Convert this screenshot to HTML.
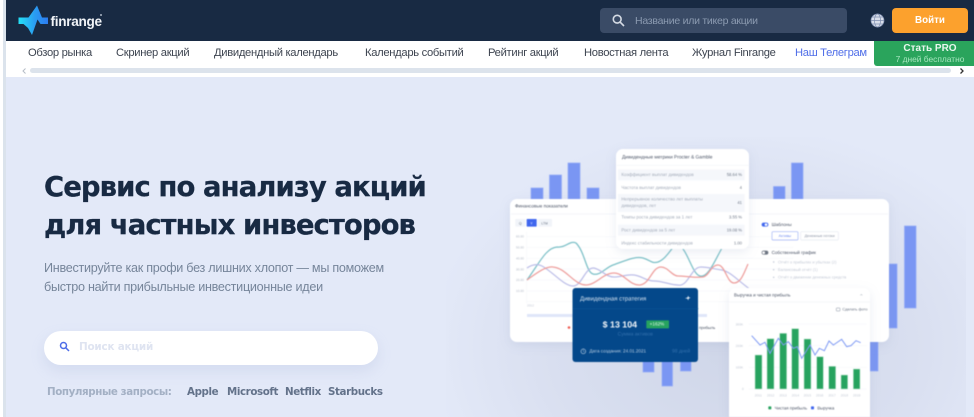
<!DOCTYPE html>
<html lang="ru"><head><meta charset="utf-8"><title>Finrange</title>
<style>
*{box-sizing:border-box;margin:0;padding:0}
html,body{width:974px;height:417px;overflow:hidden;background:#fff;font-family:"Liberation Sans",sans-serif}
.a{position:absolute;white-space:nowrap}
#strip{left:0;top:0;width:6px;height:417px;background:#fff}
#strip2{left:3px;top:0;width:3px;height:417px;background:#dbe3ec}
#top{left:6px;top:0;width:968px;height:41px;background:#182a43}
#nav{left:6px;top:41px;width:968px;height:36px;background:#fff}
#hero{left:6px;top:77px;width:968px;height:340px;background:#e3e9f8;overflow:hidden}
#glow{left:440px;top:60px;width:520px;height:300px;background:radial-gradient(ellipse at 55% 70%,#cfd6e8 0%,#d9dff0 45%,#e3e9f8 75%)}
.n{top:45.5px;font-size:11.2px;color:#3d4450;line-height:14px;letter-spacing:-.3px}
h1{font:700 27.5px/38px "DejaVu Sans",sans-serif;color:#182a43;left:44px;top:168px;letter-spacing:-.95px;-webkit-text-stroke:.25px #182a43}
.p{left:44px;font-size:12.6px;color:#76859a;line-height:18px;letter-spacing:-.27px}
.m{top:385px;font:700 10.3px/14px "DejaVu Sans",sans-serif;color:#63728a;letter-spacing:-.4px}
svg text{font-family:"Liberation Sans",sans-serif;text-rendering:geometricPrecision}
</style></head><body>
<div class="a" id="strip"></div><div class="a" id="strip2"></div>
<div class="a" id="top"></div>
<svg class="a" style="left:0;top:0" width="60" height="40" viewBox="0 0 60 40">
<defs><linearGradient id="lg" x1="0" x2="1" y1="0" y2="0"><stop offset="0" stop-color="#25e0f5"/><stop offset=".55" stop-color="#2a9cf2"/><stop offset="1" stop-color="#2c7cf0"/></linearGradient></defs>
<path d="M18.500 17.500H28.500L37 5.500 42 17.500H48V24H40.500L37.500 19.500 32 35 28 28 23.500 24H18.500Z" fill="url(#lg)"/>
</svg>
<div class="a" style="left:50.500px;top:12.500px;font-size:13.6px;font-weight:700;color:#f1f4f8;letter-spacing:-.3px;line-height:17px">finrange</div>
<div class="a" style="left:100px;top:14px;width:2px;height:2px;border-radius:50%;background:#aab5c4"></div>

<div class="a" style="left:600px;top:8px;width:247px;height:25px;background:#3a4b66;border-radius:4px"></div>
<svg class="a" style="left:612px;top:14px" width="13" height="13" viewBox="0 0 13 13" fill="none" stroke="#d5dbe4" stroke-width="1.600"><circle cx="5.200" cy="5.200" r="3.900"/><path d="M8.200 8.200L12 12"/></svg>
<div class="a" style="left:635px;top:13.500px;font-size:10.500px;color:#8c9bb1;line-height:14px;letter-spacing:-.25px">Название или тикер акции</div>
<svg class="a" style="left:870px;top:13px" width="15" height="15" viewBox="0 0 15 15" fill="#d8deea" stroke="#7f8fb0" stroke-width=".7"><circle cx="7.500" cy="7.500" r="6.500"/><ellipse cx="7.500" cy="7.500" rx="3" ry="6.500" fill="none"/><path d="M1 7.500H14M2 4H13M2 11H13" fill="none"/></svg>
<div class="a" style="left:892px;top:8px;width:76px;height:25px;background:#fca12d;border-radius:4px;text-align:center;color:#fff;font-size:9.800px;font-weight:700;line-height:25px">Войти</div>

<div class="a" id="nav"></div>
<div class="a n" style="left:28px">Обзор рынка</div>
<div class="a n" style="left:116px">Скринер акций</div>
<div class="a n" style="left:214px">Дивидендный календарь</div>
<div class="a n" style="left:365px">Календарь событий</div>
<div class="a n" style="left:488px">Рейтинг акций</div>
<div class="a n" style="left:584px">Новостная лента</div>
<div class="a n" style="left:692px">Журнал Finrange</div>
<div class="a n" style="left:795px;color:#4f6ee8">Наш Телеграм</div>
<div class="a" style="left:874px;top:41px;width:100px;height:25px;background:#2aa45c;border-radius:0 0 0 3px"></div>
<div class="a" style="left:890px;top:43px;width:80px;text-align:center;font-size:10px;font-weight:700;color:#e9f7ef;line-height:12px">Стать PRO</div>
<div class="a" style="left:890px;top:52.500px;width:80px;text-align:center;font-size:8.400px;color:#a8e6bf;line-height:12px">7 дней бесплатно</div>
<div class="a" style="left:30px;top:68px;width:921px;height:5px;background:#dce3ec;border-radius:3px"></div>
<svg class="a" style="left:20px;top:67px" width="8" height="8" viewBox="0 0 8 8" fill="none" stroke="#b5bcc6" stroke-width="1"><path d="M5.500 1.500L3 4l2.500 2.500"/></svg>
<svg class="a" style="left:958px;top:67px" width="8" height="8" viewBox="0 0 8 8" fill="none" stroke="#333" stroke-width="1.300"><path d="M2.500 1.500L5 4 2.500 6.500"/></svg>

<div class="a" id="hero"><div class="a" id="glow"></div></div>

<h1 class="a">Сервис по анализу акций<br>для частных инвесторов</h1>
<div class="a p" style="top:259px">Инвестируйте как профи без лишних хлопот — мы поможем</div>
<div class="a p" style="top:278px">быстро найти прибыльные инвестиционные идеи</div>

<div class="a" style="left:44px;top:331px;width:334px;height:34px;background:#fff;border-radius:17px;box-shadow:0 6px 14px rgba(150,165,210,.2)"></div>
<svg class="a" style="left:59px;top:341px" width="11" height="12" viewBox="0 0 11 12" fill="none" stroke="#4f6ee8" stroke-width="1.500"><circle cx="4.500" cy="4.500" r="3"/><path d="M6.800 6.800L10 10"/></svg>
<div class="a" style="left:79px;top:340px;font:700 10.400px/14px 'DejaVu Sans',sans-serif;color:#dfe4f1;letter-spacing:-.2px">Поиск акций</div>
<div class="a m" style="left:47px;color:#a3b0c4">Популярные запросы:</div>
<div class="a m" style="left:187px">Apple</div>
<div class="a m" style="left:227px">Microsoft</div>
<div class="a m" style="left:285px">Netflix</div>
<div class="a m" style="left:328px">Starbucks</div>

<svg class="a" style="left:0;top:0;filter:blur(.45px)" width="974" height="417" viewBox="0 0 974 417">
<defs>
<filter id="sh" x="-10%" y="-10%" width="120%" height="125%"><feDropShadow dx="0" dy="3" stdDeviation="5" flood-color="#8c9ac0" flood-opacity=".18"/></filter>
</defs>
<g fill="#7a96f3" stroke="#92a9f5" stroke-width=".7">
<rect x="531" y="188" width="12" height="20"/><rect x="549.500" y="175" width="12" height="30"/><rect x="568" y="163" width="12" height="42"/><rect x="587" y="188" width="12" height="20"/>
<rect x="773.500" y="186.500" width="11.500" height="20"/><rect x="791.500" y="163" width="11.500" height="40"/>
<rect x="885.500" y="264" width="11.500" height="64"/><rect x="904.500" y="226" width="11.500" height="82"/>
<rect x="870" y="335" width="8" height="36"/>
<rect x="643" y="350" width="11" height="22"/><rect x="662" y="350" width="10.500" height="36"/><rect x="680.500" y="350" width="10.500" height="21"/>
</g>
<!-- wide card -->
<rect x="510" y="199" width="379" height="143" rx="7" fill="#fff" filter="url(#sh)"/>
<path d="M511 214H888" stroke="#f3f5fa"/>
<g transform="translate(500 130) scale(.33333)">
<text x="45" y="233" font-size="14" fill="#4b5466">Финансовые показатели</text>
<rect x="46" y="267" width="30" height="23" rx="2" fill="#f1f4f9"/><text x="57" y="283" font-size="10" fill="#6c7686">Q</text>
<rect x="80" y="267" width="30" height="23" rx="2" fill="#3f66ee"/><text x="91" y="283" font-size="10" fill="#fff">Y</text>
<rect x="114" y="267" width="42" height="23" rx="2" fill="#f1f4f9"/><text x="124" y="283" font-size="10" fill="#6c7686">LTM</text>
<g font-size="9.500" fill="#b5bcc9">
<text x="48" y="323">60.00</text><text x="48" y="356">50.00</text><text x="48" y="388">40.00</text><text x="48" y="421">30.00</text><text x="48" y="453">20.00</text><text x="48" y="486">10.00</text>
</g>
<g stroke="#f3f5f9" stroke-width="1.500">
<path d="M80 320H880M80 352H880M80 385H880M80 417H880M80 450H880M80 483H880M80 515H880M80 305V520"/>
</g>
</g>
<g fill="none" stroke-width="1.250">
<path d="M527 280C540 262 546 248 557 247 566 248 570 240 576 243 585 252 586 272 593 274 600 276 605 268 613 265 625 261 634 256 643 258 650 260 652 264 658 262 668 258 672 245 678 244 688 250 692 274 700 276 708 278 714 262 722 248" stroke="#7cc0c7"/>
<path d="M527 268C533 264 538 264 542 266 553 272 564 286 573 286 582 286 585 267 594 268 602 270 606 277 614 277 622 277 626 274 634 275 642 276 646 281 654 281 664 281 672 286 681 285 689 283 692 267 701 267 708 267 714 269 722 270 731 272 738 281 755 293" stroke="#bcbee8"/>
<path d="M527 280C534 275 545 266 553 267 566 268 574 285 586 285 596 285 603 273 614 273 624 273 630 286 640 285 650 284 652 267 661 267 668 267 672 276 678 276 686 276 694 278 703 277 709 276 711 265 718 265 725 265 727 283 734 283 741 283 744 273 748 264" stroke="#ee9f9d"/>
</g>
<g transform="translate(505 270) scale(.33333)">
<g font-size="9.500" fill="#c2c8d4"><text x="66" y="110">2012</text></g>
</g>
<rect x="527" y="314" width="180" height="3" fill="#dfe6f9"/>
<circle cx="569" cy="327.500" r="1.300" fill="#ef5a50"/>
<text x="699" y="329" font-size="4" fill="#4a5364">прибыль</text>
<!-- templates panel -->
<g transform="translate(730 140) scale(.33333)">
<rect x="95" y="248" width="20" height="12" rx="6" fill="#3f66ee"/><circle cx="108" cy="254" r="4" fill="#fff"/>
<text x="125" y="258" font-size="13.500" fill="#4b5466">Шаблоны</text>
<rect x="126" y="275" width="78" height="25" rx="3" fill="#fff" stroke="#9fb2f5" stroke-width="2"/><text x="146" y="291" font-size="11" fill="#6c87ee">Активы</text>
<rect x="212" y="275" width="113" height="25" rx="3" fill="#fff" stroke="#e6eaf2" stroke-width="2"/><text x="224" y="291" font-size="11" fill="#8c95a5">Денежные потоки</text>
<rect x="95" y="332" width="20" height="12" rx="6" fill="#6d7582"/><circle cx="101" cy="338" r="4" fill="#fff"/>
<text x="125" y="342" font-size="13.500" fill="#4b5466">Собственный график</text>
<g font-size="11.800" fill="#c4cad6">
<text x="144" y="370">Отчёт о прибылях и убытках (2)</text>
<text x="144" y="393">Балансовый отчёт (1)</text>
<text x="144" y="416">Отчёт о движении денежных средств</text>
</g>
<g fill="#ccd2de"><circle cx="131" cy="366" r="2.500"/><circle cx="131" cy="389" r="2.500"/><circle cx="131" cy="412" r="2.500"/></g>
</g>
<!-- dividend metrics -->
<rect x="616" y="149" width="133" height="100" rx="7" fill="#fff" filter="url(#sh)"/>
<g transform="translate(500 130) scale(.33333)">
<text x="366" y="85" font-size="14.500" fill="#4b5466">Дивидендные метрики Procter &amp; Gamble</text>
<path d="M350 106H748" stroke="#f2f4f8" stroke-width="2"/>
<g fill="#f5f7fb"><rect x="354" y="118" width="380" height="33"/><rect x="354" y="192" width="380" height="54"/><rect x="354" y="284" width="380" height="33"/></g>
<g font-size="13.500" fill="#a3abb9">
<text x="364" y="138">Коэффициент выплат дивидендов</text>
<text x="364" y="177">Частота выплат дивидендов</text>
<text x="364" y="212">Непрерывное количество лет выплаты</text>
<text x="364" y="231">дивидендов, лет</text>
<text x="364" y="266">Темпы роста дивидендов за 1 лет</text>
<text x="364" y="305">Рост дивидендов за 5 лет</text>
<text x="364" y="343">Индекс стабильности дивидендов</text>
</g>
<g font-size="12.500" fill="#6d7686" text-anchor="end">
<text x="726" y="138">58.64 %</text><text x="726" y="177">4</text><text x="726" y="222">41</text><text x="726" y="266">3.55 %</text><text x="726" y="305">19.08 %</text><text x="726" y="343">1.00</text>
</g>
</g>
<!-- blue card -->
<rect x="572.500" y="288" width="125.500" height="74" rx="3" fill="#04488a"/>
<g transform="translate(500 280) scale(.33333)">
<text x="240" y="61" font-size="18" fill="#d5e2f0">Дивидендная стратегия</text>
<path d="M555 55l8-3 1-5 3 5 5 1-6 3-1 5-3-5z" fill="#e6eef7"/>
<path d="M218 86H595" stroke="#0b5296" stroke-width="2"/>
<text x="308" y="143" font-size="26.500" font-weight="700" fill="#f3f7fb">$ 13 104</text>
<rect x="439" y="121" width="68" height="24" rx="2" fill="#27a35f"/><text x="449" y="137" font-size="14" fill="#dff5e8">+162%</text>
<text x="353" y="167" font-size="15" fill="#3370ad">Сумма активов</text>
<circle cx="250" cy="214" r="7" fill="none" stroke="#b8cde2" stroke-width="2"/><path d="M250 210v4l3 2" fill="none" stroke="#b8cde2" stroke-width="1.500"/>
<text x="268" y="218" font-size="13.800" fill="#b8cde2">Дата создания: 24.01.2021</text>
<text x="516" y="218" font-size="15" fill="#3370ad">98 дней</text>
</g>
<!-- revenue card -->
<rect x="729" y="288" width="141" height="135" rx="7" fill="#fff" filter="url(#sh)"/>
<g transform="translate(720 280) scale(.33333)">
<text x="42" y="49" font-size="13.500" fill="#4b5466">Выручка и чистая прибыль</text>
<path d="M421 46l3-3 3 3" fill="none" stroke="#8a93a3" stroke-width="1.500"/>
<path d="M28 66H450" stroke="#f2f4f8" stroke-width="2"/>
<rect x="349" y="84" width="11" height="9" rx="1" fill="none" stroke="#8a93a3" stroke-width="1.500"/>
<text x="367" y="92" font-size="11.500" fill="#6d7686">Сделать фото</text>
<g font-size="9.500" fill="#c2c8d4"><text x="47" y="136">300K</text><text x="47" y="201">200K</text><text x="47" y="266">100K</text><text x="66" y="330">0</text></g>
<path d="M86 132H440M86 197H440M86 262H440M86 327H440" stroke="#f2f4f8" stroke-width="1.500"/>
<g fill="#27a35f" stroke="#c2e5d1" stroke-width="1.500">
<rect x="105" y="225" width="21" height="102"/><rect x="141" y="176" width="21" height="151"/><rect x="179" y="160" width="21" height="167"/><rect x="215" y="146" width="21" height="181"/><rect x="252" y="177" width="21" height="150"/><rect x="290" y="230" width="20" height="97"/><rect x="326" y="259" width="21" height="68"/><rect x="363" y="285" width="20" height="42"/><rect x="400" y="267" width="20" height="60"/>
</g>
<path d="M95 167L120 195 135 187 150 220 175 175 190 195 205 185 220 205 232 200 245 235 270 195 285 225 298 205 313 212 327 183 340 195 365 178 380 200 393 197 408 182 422 188" fill="none" stroke="#7f9af4" stroke-width="3"/>
<g font-size="10" fill="#c2c8d4"><text x="104" y="350">2011</text><text x="141" y="350">2012</text><text x="178" y="350">2013</text><text x="215" y="350">2014</text><text x="251" y="350">2015</text><text x="288" y="350">2016</text><text x="325" y="350">2017</text><text x="362" y="350">2018</text><text x="399" y="350">2019</text></g>
<rect x="145" y="379" width="9" height="9" rx="2" fill="#27a35f"/><text x="164" y="388" font-size="12.800" fill="#4b5466">Чистая прибыль</text>
<rect x="273" y="379" width="9" height="9" rx="2" fill="#3f66ee"/><text x="292" y="388" font-size="12.800" fill="#4b5466">Выручка</text>
</g>
</svg>
</body></html>
